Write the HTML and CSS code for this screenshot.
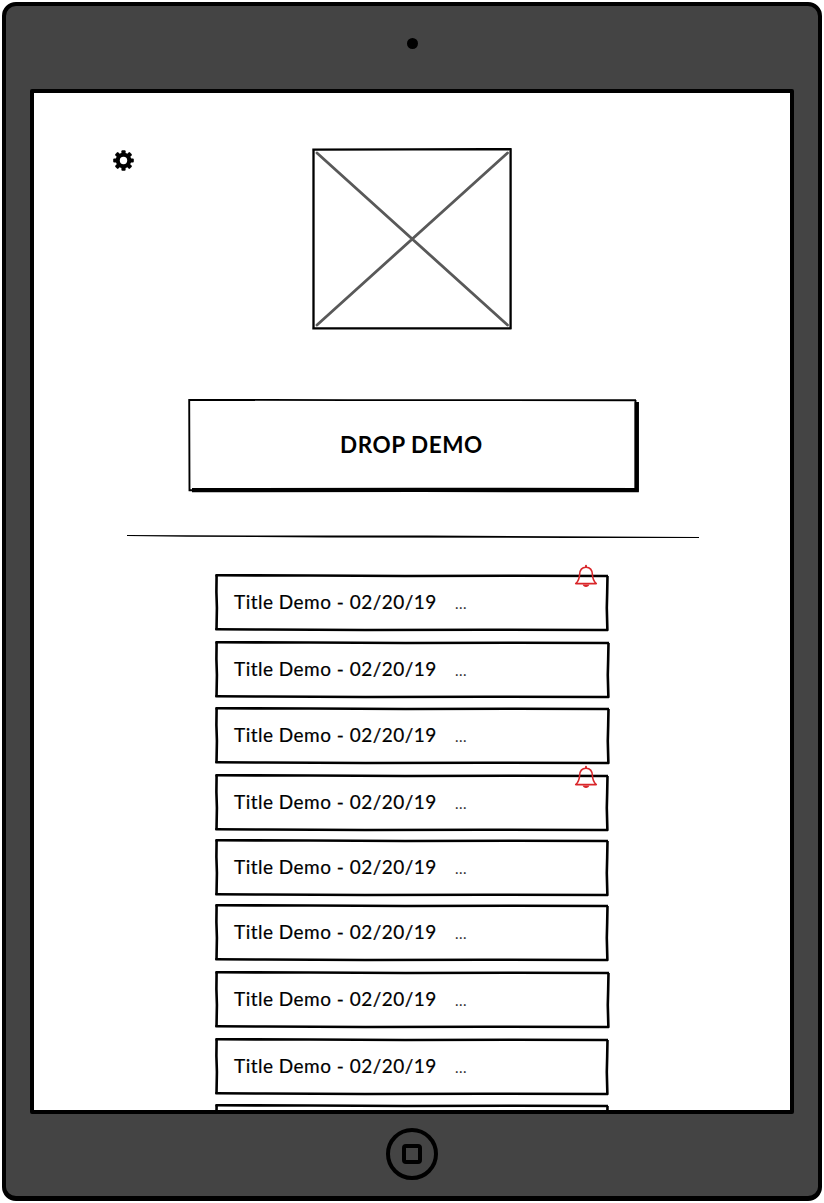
FILE: index.html
```html
<!DOCTYPE html>
<html lang="en">
<head>
<meta charset="utf-8">
<title>Drop Demo</title>
<link rel="stylesheet" href="styles.css">
</head>
<body>
<svg class="defs" aria-hidden="true">
  <symbol id="box" viewBox="0 0 396 58" preserveAspectRatio="none">
    <path d="M.8 1H391.5L393.2 2.2V28L392.6 57L380 57.4H190L60 56.8L1 56.2L.8 40L1.4 20Z"/>
    <path d="M.4 1.3L95 1.5L190 2L300 1.8L393 2"/>
    <path d="M1.6 1L1.4 18L1.9 34L1.5 56"/>
    <path d="M.4 55.2L50 55.5L150 56L270 55.7L393 56"/>
    <path d="M392.5 2L392.2 18L391.8 34L392.4 56.8"/>
  </symbol>
  <symbol id="bell" viewBox="0 0 24 24">
    <path d="M1.7 19.6C4.500 17.200 5.400 14.700 5.600 10.500C5.800 5.500 7.800 3.200 12 3.200S18.200 5.500 18.400 10.500C18.600 14.700 19.500 17.200 22.300 19.600Z" fill="none" stroke="#d9262a" stroke-width="1.6" stroke-linejoin="round"/>
    <path d="M12 1.800V3" stroke="#d9262a" stroke-width="2" stroke-linecap="round"/>
    <path d="M8.700 20.500H15.300C15 23.800 9 23.800 8.700 20.500Z" fill="#d9262a"/>
  </symbol>
</svg>
<div class="device">
  <div class="camera"></div>
  <main class="screen">
    <header class="top">
      <svg class="gear" viewBox="-10.5 -10.5 21 21">
        <g fill="#000">
          <rect id="tooth" x="-2.1" y="-10.3" width="4.2" height="20.6" rx="1"/>
          <use href="#tooth" transform="rotate(45)"/>
          <use href="#tooth" transform="rotate(90)"/>
          <use href="#tooth" transform="rotate(135)"/>
          <circle r="7.8"/>
        </g>
        <circle r="3.7" fill="#fff"/>
      </svg>
      <svg class="picture" viewBox="0 0 200 182">
        <path d="M5 5L195.500 177M195.500 5L5 177" stroke="#595959" stroke-width="2.800" stroke-linecap="round"/>
        <path d="M.3 1.700L100 1.300L199.500 1.100M1.500 1V180.500M.3 180.300H199.500M198.600 .5V181" fill="none" stroke="#000" stroke-width="2.300"/>
      </svg>
    </header>
    <button class="drop">
      <svg class="drop-frame" viewBox="0 0 452 94">
        <path d="M4 91.100L230 90.900L450.800 91.100M448.800 3V92.800" stroke="#000" stroke-width="4.300" fill="none"/>
        <path d="M.3 .8L160 1.100L448 1.200M1.200 .5L1.500 92M.6 91.200H10M447.500 1V90" stroke="#000" stroke-width="1.900" fill="none"/>
      </svg>
      <span class="drop-text">DROP DEMO</span>
    </button>
    <svg class="rule" viewBox="0 0 572 4"><path d="M0 0L60 .3L300 .6L572 2V3L440 3L200 2.400L60 1.700L0 1Z"/></svg>
    <ul class="list">
      <li class="row"><svg class="frame"><use href="#box"/></svg><span class="title">Title Demo - 02/20/19</span><span class="dots">...</span><svg class="bell"><use href="#bell"/></svg></li>
      <li class="row wide gap-10"><svg class="frame"><use href="#box"/></svg><span class="title">Title Demo - 02/20/19</span><span class="dots">...</span></li>
      <li class="row wide gap-9"><svg class="frame"><use href="#box"/></svg><span class="title">Title Demo - 02/20/19</span><span class="dots">...</span></li>
      <li class="row gap-10"><svg class="frame"><use href="#box"/></svg><span class="title">Title Demo - 02/20/19</span><span class="dots">...</span><svg class="bell low"><use href="#bell"/></svg></li>
      <li class="row gap-8"><svg class="frame"><use href="#box"/></svg><span class="title">Title Demo - 02/20/19</span><span class="dots">...</span></li>
      <li class="row gap-8"><svg class="frame"><use href="#box"/></svg><span class="title">Title Demo - 02/20/19</span><span class="dots">...</span></li>
      <li class="row wide gap-10"><svg class="frame"><use href="#box"/></svg><span class="title">Title Demo - 02/20/19</span><span class="dots">...</span></li>
      <li class="row gap-10"><svg class="frame"><use href="#box"/></svg><span class="title">Title Demo - 02/20/19</span><span class="dots">...</span></li>
      <li class="row gap-9"><svg class="frame"><use href="#box"/></svg></li>
    </ul>
  </main>
  <div class="home"><div class="home-square"></div></div>
</div>
</body>
</html>
```
FILE: styles.css
```css
* { box-sizing: border-box; }
body {
  margin: 0;
  padding: 2px;
  height: 1203px;
  overflow: hidden;
  background: #fff;
  color: #000;
  font-family: Lato, "Open Sans", sans-serif;
}
svg { display: block; flex: none; }
.defs { position: absolute; width: 0; height: 0; }
.device {
  display: flex;
  flex-direction: column;
  align-items: center;
  width: 820px;
  height: 1199px;
  background: #444;
  border: 4px solid #000;
  border-bottom-width: 5px;
  border-radius: 14px;
}
.camera {
  flex: none;
  width: 11px;
  height: 11px;
  margin-top: 32px;
  border-radius: 50%;
  background: #000;
}
.screen {
  flex: none;
  display: flex;
  flex-direction: column;
  width: 764px;
  height: 1025px;
  margin-top: 40px;
  border: 4px solid #000;
  border-radius: 2px;
  background: #fff;
  overflow: hidden;
}
.top { display: flex; flex: none; padding: 55px 0 0 79px; }
.gear { width: 21px; height: 21px; margin-top: 2px; }
.picture { width: 200px; height: 182px; margin-left: 178px; }
.drop {
  display: grid;
  flex: none;
  width: 452px;
  height: 94px;
  margin: 69px 0 0 154px;
  padding: 0;
  border: 0;
  background: none;
  color: #000;
  font: 700 22.5px/30px Lato, sans-serif;
}
.drop-frame, .drop-text { grid-area: 1 / 1; }
.drop-frame { width: 452px; height: 94px; }
.drop-text { padding: 31px 0 0 152px; text-align: left; letter-spacing: 0.55px; white-space: nowrap; }
.rule { width: 572px; height: 4px; margin: 42px 0 0 93px; }
.list { flex: none; margin: 35px 0 0 181px; padding: 0; list-style: none; }
.row { position: relative; display: grid; grid-template-columns: 240px 1fr; width: 394px; height: 57px; }
.gap-8 { margin-top: 8px; }
.gap-9 { margin-top: 9px; }
.gap-10 { margin-top: 10px; }
.frame { grid-area: 1 / 1 / 2 / 3; width: 396px; height: 58px; }
.wide .frame { width: 397px; }
.title {
  grid-area: 1 / 1;
  z-index: 1;
  padding: 15px 0 0 19px;
  font-size: 19px;
  line-height: 25px;
  letter-spacing: 0.48px;
  white-space: nowrap;
  -webkit-text-stroke: 0.2px #000;
}
.dots { grid-area: 1 / 2; z-index: 1; padding-top: 18px; font-size: 15px; line-height: 23px; letter-spacing: 0.5px; color: #333; }
.bell { position: absolute; left: 359px; top: -10px; width: 24px; height: 24px; }
.bell.low { top: -9px; }
.home {
  display: flex;
  flex: none;
  align-items: center;
  justify-content: center;
  width: 52px;
  height: 52px;
  margin-top: 14px;
  border: 4px solid #000;
  border-radius: 50%;
}
.home-square { width: 20px; height: 20px; border: 4px solid #000; border-radius: 4px; }
#box path { stroke: #000; stroke-width: 2.6; fill: none; }
#box path:first-child { fill: #fff; stroke: none; }
```
